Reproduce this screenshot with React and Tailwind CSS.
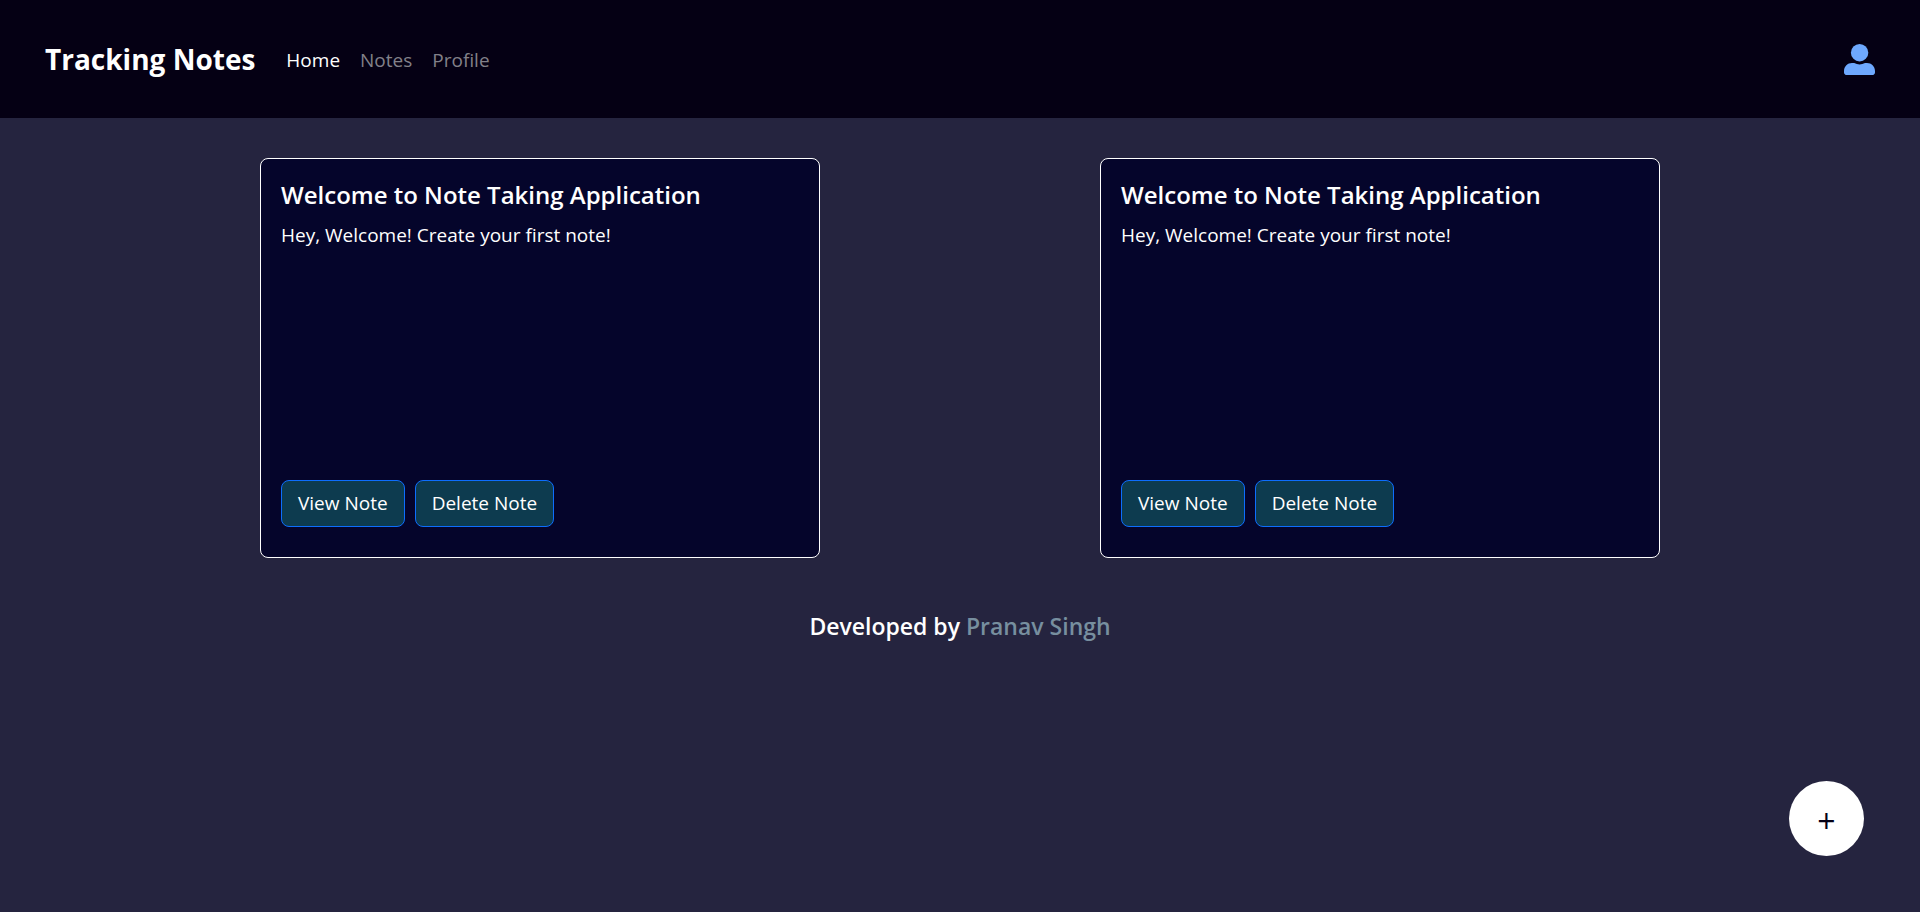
const notes = [
  { id: 1, title: 'Welcome to Note Taking Application', body: 'Hey, Welcome! Create your first note!' },
  { id: 2, title: 'Welcome to Note Taking Application', body: 'Hey, Welcome! Create your first note!' },
];

function UserIcon() {
  return (
    <svg viewBox="0 0 31 31" className="size-[31px]" fill="currentColor" aria-hidden="true">
      <circle cx="15.6" cy="8.7" r="8.7" />
      <path d="M8 19.1h2.200c3.400 1.700 7.400 1.700 10.800 0H23c4.400 0 8 3.500 8 8v1.300c0 1.500-1.200 2.600-2.900 2.600H2.900C1.200 31 0 29.900 0 28.400v-1.300c0-4.500 3.600-8 8-8z" />
    </svg>
  );
}

function NoteButton({ children }) {
  return (
    <button type="button" className="rounded-lg border border-[#0d6efd] bg-[#0d3b4f] px-4 py-2 text-[19px] leading-[29px]">
      {children}
    </button>
  );
}

function NoteCard({ note }) {
  return (
    <article className="m-5 flex min-h-[400px] w-full max-w-[560px] flex-col rounded-lg border border-white bg-[#05052b] px-5 pt-5 pb-[30px]">
      <h2 className="text-2xl leading-[32px] font-semibold">{note.title}</h2>
      <p className="mt-2 grow text-[19px] leading-[32px]">{note.body}</p>
      <div className="flex gap-[10px]">
        <NoteButton>View Note</NoteButton>
        <NoteButton>Delete Note</NoteButton>
      </div>
    </article>
  );
}

export default function App() {
  return (
    <div className="min-h-screen bg-[#25243f] font-['Open_Sans','Noto_Sans',sans-serif] text-white">
      <header className="flex min-h-[118px] items-center bg-[#050014] px-[45px]">
        <a href="#" className="mr-[21px] text-[28px] leading-[40px] font-bold">Tracking Notes</a>
        <nav className="flex pt-[2px] text-[19px] leading-[30px] text-[#828089]">
          <a href="#" className="px-[10px] text-white">Home</a>
          <a href="#" className="px-[10px]">Notes</a>
          <a href="#" className="px-[10px]">Profile</a>
        </nav>
        <button type="button" aria-label="Account" className="ml-auto text-[#6ea8fe]">
          <UserIcon />
        </button>
      </header>
      <main className="flex flex-wrap justify-evenly pt-5">
        {notes.map((note) => <NoteCard key={note.id} note={note} />)}
      </main>
      <footer className="pt-8 text-center text-[23px] leading-[32px] font-semibold">
        Developed by <a href="#" className="text-[#778f9f]">Pranav Singh</a>
      </footer>
      <button type="button" aria-label="Add note" className="fixed right-14 bottom-14 flex size-[75px] items-center justify-center rounded-full bg-white pt-1 text-[32px] leading-[40px] text-[#050014]">
        +
      </button>
    </div>
  );
}
